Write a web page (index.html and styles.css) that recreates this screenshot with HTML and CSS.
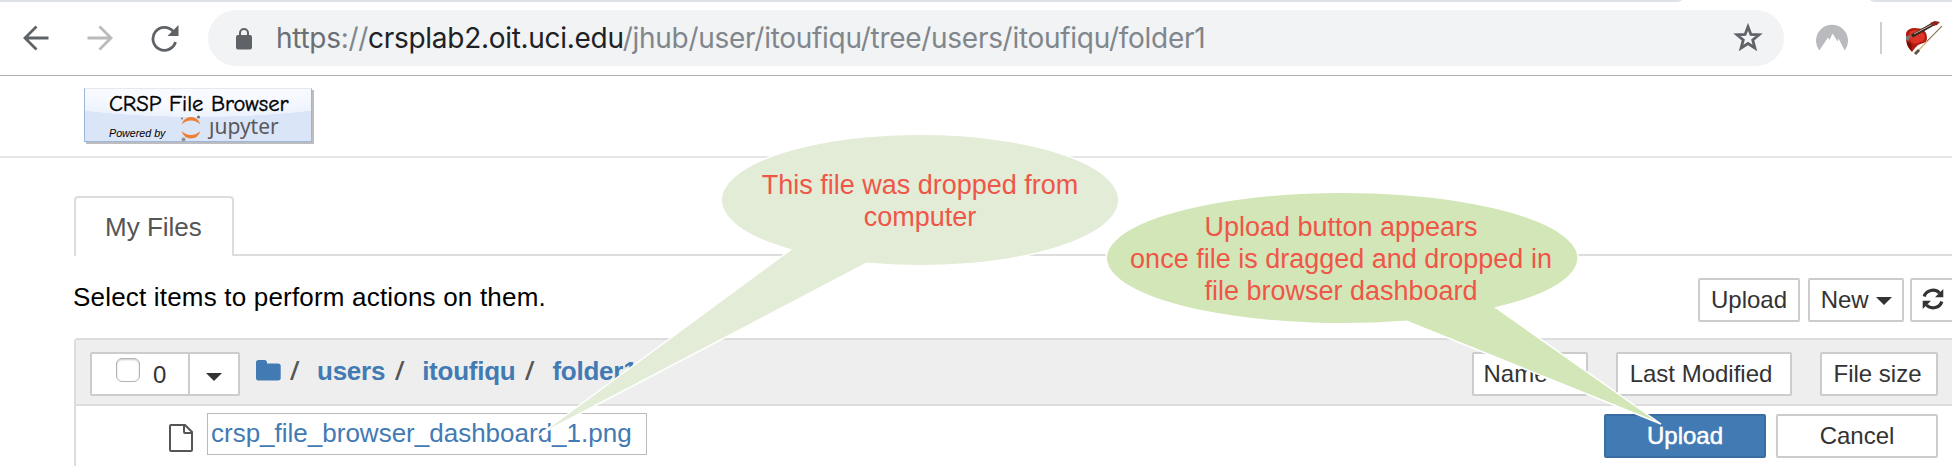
FILE: index.html
```html
<!DOCTYPE html>
<html lang="en">
<head>
<meta charset="utf-8">
<title>CRSP File Browser</title>
<link rel="stylesheet" href="styles.css">
</head>
<body>
<div class="page">
  <header class="toolbar">
    <svg class="tabstrip" width="1952" height="2" viewBox="0 0 1952 2"><path d="M0 0H1682Q1680 2 1675 2H0ZM1870 0H1952V2H1877Q1872 2 1870 0Z"/></svg>
    <svg class="nav-icon" width="26" height="26" viewBox="0 0 26 26"><path d="M25.500 13H2M13.500 1.500 2 13l11.500 11.500"/></svg>
    <svg class="nav-icon nav-forward" width="26" height="26" viewBox="0 0 26 26"><path d="M.5 13H24M12.500 1.500 24 13 12.500 24.500"/></svg>
    <svg class="nav-icon nav-reload" width="28" height="28" viewBox="0 0 28 28"><path d="M22.200 6.300A11.500 11.500 0 1 0 24.500 17"/><path class="solid" d="M27.500 0V11H16.500Z"/></svg>
    <div class="omnibox">
      <svg class="lock" width="16" height="22" viewBox="0 0 16 22"><path class="solid" d="M2 7H14Q16 7 16 9V19.500Q16 21.500 14 21.500H2Q0 21.500 0 19.500V9Q0 7 2 7Z"/><path class="shackle" d="M4 8V5a4 4 0 0 1 8 0V8"/></svg>
      <div class="url"><span class="scheme">https</span>://<span class="host">crsplab2.oit.uci.edu</span>/jhub/user/itoufiqu/tree/users/itoufiqu/folder1</div>
      <svg class="star" width="30" height="29" viewBox="0 0 30 29"><path d="M15 3.800 17.900 11.400 26 11.800 19.700 16.900 21.900 25 15 20.500 8.100 25 10.300 16.900 4 11.800 12.100 11.400Z"/></svg>
    </div>
    <svg class="ext" width="32" height="27" viewBox="0 0 32 27"><path d="M3.300 26.500A16 16 0 1 1 28.700 26.500L22.500 14.500 21.700 17.500 16.500 9.500 13.700 16 12 13.500Z"/></svg>
    <div class="divider"></div>
    <svg class="violin" width="37" height="35" viewBox="0 0 37 35">
      <path d="M0 12Q2 7 9 7L17 8 20 12Q22 17 20 21L12 24 9 27 6 31Q1 26 0 19Z" fill="#b3190f"/>
      <path d="M3 12Q7 8 13 9L18 13Q20 17 17 20L9 23 5 21Z" fill="#dc3426"/>
      <path d="M1 20 5 23 6 30Q0 25 1 20" fill="#741008"/>
      <path d="M6 15 29 2" stroke="#302620" stroke-width="3.500"/>
      <path d="M8 13 27 3" stroke="#c7b39e"/>
      <path d="M0 15 5 14 3 20 0 19Z" fill="#7d7774"/>
      <path d="M24 2 29 0 34 1 31 4 27 5Z" fill="#8e251d"/>
      <path d="M36 5 10 32" stroke="#d8b581" stroke-width="1.500"/>
      <path d="M36 5 21 20" stroke="#777"/><path d="M9 33 13 29" stroke="#5f5146" stroke-width="3"/>
    </svg>
  </header>

  <div class="site-header">
    <div class="logo">
      <div class="logo-title">CRSP File Browser</div>
      <div class="logo-sub">
        <span class="powered">Powered by</span>
        <svg class="jupiter" width="20" height="27" viewBox="0 0 20 27"><path fill="#ee7f37" d="M.5 9.500Q3 2 10 2T19.500 9.500Q15 5.500 10 5.500T.5 9.500ZM.5 16Q3 23.500 10 23.500T19.500 16Q15 20 10 20T.5 16Z"/><circle cx="17.500" cy="2" r="1.600" fill="#77787b"/><circle cx="1" cy="3.500" r="1" fill="#77787b"/><circle cx="2.500" cy="24.500" r="2" fill="#929497"/></svg>
        <span class="jupyter"><span class="dotless">j</span>upyter</span>
      </div>
    </div>
  </div>

  <nav class="tabs"><div class="tab"><span>My Files</span></div></nav>

  <div class="actions">
    <div class="hint">Select items to perform actions on them.</div>
    <div class="btn upload-top">Upload</div>
    <div class="btn new">New <i class="caret"></i></div>
    <div class="btn refresh"><svg width="22" height="22" viewBox="0 0 22 22"><path d="M2.200 8.500A9 8.500 0 0 1 17.500 5M19.800 13.500A9 8.500 0 0 1 4.500 17"/><path class="solid" d="M21.300 1V9.200H13ZM.7 21V12.800H9Z"/></svg></div>
  </div>

  <main class="list">
    <div class="list-head">
      <div class="select-group">
        <div class="select-all"><i class="checkbox"></i><span>0</span></div>
        <div class="select-menu"><i class="caret"></i></div>
      </div>
      <div class="crumbs">
        <svg class="folder" width="25" height="21" viewBox="0 0 25 21"><path d="M2.500 0H8.500Q11 0 11 2.500V3.500H22Q24.700 3.500 24.700 6V18Q24.700 20.500 22 20.500H2.500Q0 20.500 0 18V2.500Q0 0 2.500 0Z"/></svg>
        <span class="slash first">/</span><a class="users">users</a><span class="slash">/</span><a class="home">itoufiqu</a><span class="slash">/</span><a>folder1</a>
      </div>
      <div class="btn name">Name</div>
      <div class="btn modified">Last Modified</div>
      <div class="btn size">File size</div>
    </div>
    <div class="row">
      <svg class="file" width="24" height="28" viewBox="0 0 24 28"><path d="M1 2Q1 1 2 1H16L23 8V26Q23 27 22 27H2Q1 27 1 26ZM15 1V8Q15 9 16 9H23"/></svg>
      <div class="filename">crsp_file_browser_dashboard_1.png</div>
      <div class="btn primary">Upload</div>
      <div class="btn cancel">Cancel</div>
    </div>
  </main>

  <svg class="bubbles" width="1952" height="466" viewBox="0 0 1952 466">
    <path fill="#e2ecd6" d="M790.500 249.800A199 65.700 0 0 1 920.300 134.300A199 65.700 0 1 1 866.500 263.300L539 435Z"/>
    <path fill="#d2e6b8" d="M1406.700 321.200A236 65.700 0 1 1 1342 192.300A236 65.700 0 0 1 1496 307.800L1661 424Z"/>
  </svg>
  <div class="note note-file">This file was dropped from<br>computer</div>
  <div class="note note-upload">Upload button appears<br>once file is dragged and dropped in<br>file browser dashboard</div>
</div>
</body>
</html>
```
FILE: styles.css
```css
* { box-sizing: border-box; }
body { margin: 0; background: #fff; }
.page {
  position: relative;
  width: 1952px;
  height: 466px;
  overflow: hidden;
  font: 26px/32px "Liberation Sans", Arial, sans-serif;
  color: #000;
}
svg { display: block; flex: none; fill: none; }

/* Browser toolbar */
.toolbar {
  position: relative;
  display: flex;
  height: 76px;
  padding: 10px 0 0 23px;
  border-bottom: 1px solid #b1b1b4;
}
.tabstrip { position: absolute; left: 0; top: 0; fill: #dee1e6; }
.nav-icon { margin-top: 15px; stroke: #5f6368; stroke-width: 2.800; }
.nav-forward { margin-left: 38px; stroke: #bababc; }
.nav-reload { margin-left: 38px; }
.solid { fill: #5f6368; stroke: none; }
.omnibox {
  display: flex;
  width: 1576px;
  height: 56px;
  margin-left: 29px;
  padding-left: 28px;
  border-radius: 28px;
  background: #f1f3f4;
}
.lock { margin-top: 18px; }
.shackle { stroke: #5f6368; stroke-width: 2; }
.url {
  width: 1402px;
  margin-left: 24px;
  font: 28px/57px Inter, Roboto, sans-serif;
  letter-spacing: -0.290px;
  color: #80868b;
  white-space: nowrap;
}
.scheme { color: #6b6f74; }
.host { color: #202124; }
.star { margin: 13px 0 0 55px; stroke: #5f6368; stroke-width: 2.800; }
.ext { margin: 14px 0 0 32px; fill: #b9babe; }
.divider { width: 2px; height: 32px; margin: 12px 0 0 32px; background: #cfcfd1; }
.violin { margin: 11px 0 0 24px; }

/* Site header */
.site-header { height: 82px; padding: 12px 0 0 84px; border-bottom: 2px solid #e7e7e7; }
.logo {
  width: 228px;
  height: 54px;
  padding: 3px 0 0 24px;
  border: 1px solid #9db5d8;
  border-top-color: #e4e8f0;
  background: radial-gradient(ellipse 180px 28px at 50% 0, #f8faff 0 55%, #edf2fc 99%, #dbe5f8 100%);
  box-shadow: 2px 2px 0 #bdbdc0;
}
.logo-title { height: 24px; font: 22.600px/24px "Comic Sans MS", "Comic Neue", Lato, sans-serif; -webkit-text-stroke: 0.400px #000; white-space: nowrap; }
.logo-sub { display: flex; height: 26px; }
.powered { width: 72px; font: italic 10.700px/34px "Liberation Sans", Arial, sans-serif; white-space: nowrap; }
.jupiter { margin-top: -1px; }
.jupyter { margin-left: 8px; font: 21px/20px "Noto Sans", sans-serif; color: #58595b; white-space: nowrap; }
.dotless { display: inline-block; clip-path: inset(6px -5px -5px -5px); }

/* Tabs */
.tabs { display: flex; height: 98px; margin-left: 74px; padding-top: 38px; border-bottom: 2px solid #ddd; }
.tab {
  width: 160px;
  height: 60px;
  padding: 13px 0 0 29px;
  border: 2px solid #ddd;
  border-bottom: 0;
  border-radius: 4px 4px 0 0;
  background: #fff;
  color: #555;
  white-space: nowrap;
}

/* Buttons */
.btn {
  flex: none;
  height: 44px;
  border: 2px solid #ccc;
  border-radius: 2px;
  background: #fff;
  color: #333;
  font-size: 24px;
  line-height: 40px;
  text-align: center;
  white-space: nowrap;
}
.caret {
  display: inline-block;
  border: solid transparent;
  border-width: 8px 8px 0;
  border-top-color: #333;
}
.actions { display: flex; height: 82px; padding: 22px 0 0 73px; }
.hint { flex: none; width: 1625px; padding-top: 3px; letter-spacing: 0.190px; }
.upload-top { width: 102px; }
.new { width: 96px; margin-left: 8px; padding-left: 1px; }
.new .caret { margin: 0 0 3px 1px; }
.refresh { width: 74px; margin-left: 6px; padding: 8px 0 0 10px; }
.refresh path { stroke: #333; stroke-width: 3.200; }
.refresh .solid { fill: #333; stroke: none; }

/* File list */
.list { margin-left: 74px; border: 2px solid #ddd; border-width: 2px 0 0 2px; border-radius: 4px 0 0; }
.list-head { display: flex; height: 66px; padding: 12px 0 0 14px; border-bottom: 2px solid #ddd; background: #eee; }
.select-group { display: flex; width: 150px; height: 44px; border: 2px solid #ccc; border-radius: 2px; background: #fff; color: #333; }
.select-all { display: flex; width: 98px; padding-left: 24px; border-right: 2px solid #ccc; font-size: 24px; line-height: 41px; }
.checkbox { width: 24px; height: 24px; margin: 4px 13px 0 0; border: 1px solid #b4b4b4; border-radius: 6px; box-shadow: inset 0 1px 2px #ccc; }
.select-menu { padding: 18px 0 0 16px; line-height: 0; }
.crumbs { display: flex; width: 1216px; margin-left: 16px; padding-top: 3px; color: #555; white-space: nowrap; }
.crumbs a { margin-right: 10px; color: #427ab3; font-weight: bold; letter-spacing: -0.250px; }
.folder { margin-top: 5px; fill: #427ab3; }
.slash { width: 18px; margin-right: 9px; transform: scaleX(1.300); transform-origin: left; }
.slash.first { margin-left: 9px; }
.name { width: 116px; padding-right: 29px; }
.modified { width: 176px; margin-left: 28px; padding-right: 6px; }
.size { width: 118px; margin-left: 28px; padding-right: 3px; }
.row { display: flex; height: 60px; padding: 7px 0 0 93px; }
.file { margin-top: 11px; stroke: #555; stroke-width: 2; }
.filename {
  width: 440px;
  height: 42px;
  margin-left: 14px;
  padding-left: 3px;
  border: 1px solid #bbb;
  color: #427ab3;
  line-height: 38px;
  white-space: nowrap;
}
.primary { width: 162px; margin: 1px 0 0 957px; border-color: #3a6da3; background: #427ab3; color: #fff; -webkit-text-stroke: 0.500px #fff; }
.cancel { width: 162px; margin: 1px 0 0 10px; }

/* Callouts drawn over the page */
.bubbles { position: absolute; left: 0; top: 0; stroke: #fff; stroke-width: 1.500; }
.note { position: absolute; color: #ef5648; font-size: 27px; text-align: center; white-space: nowrap; }
.note-file { left: 720px; top: 169px; width: 400px; }
.note-upload { left: 1106px; top: 211px; width: 470px; }
```
